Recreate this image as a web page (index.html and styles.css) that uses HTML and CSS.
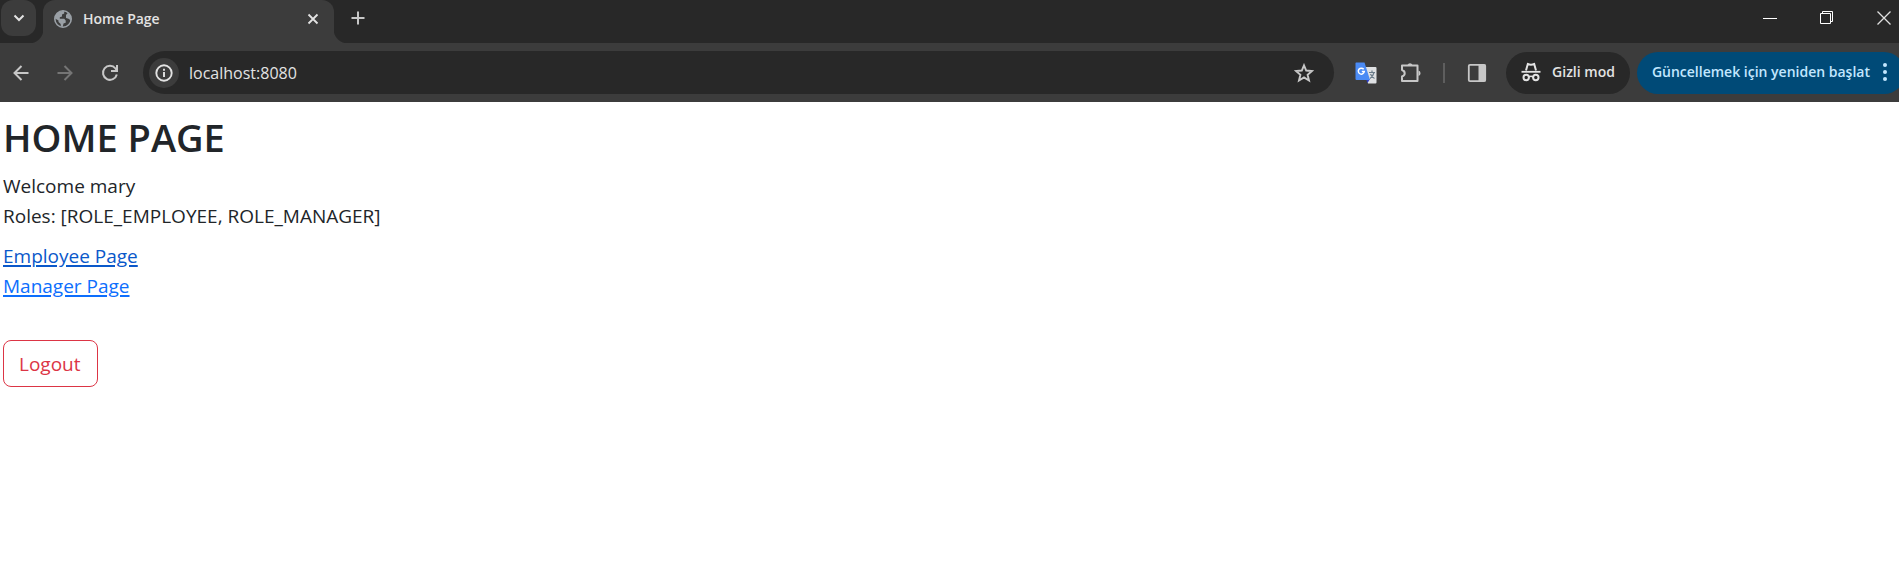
FILE: index.html
```html
<!DOCTYPE html>
<html lang="en">
<head>
<meta charset="utf-8">
<meta name="viewport" content="width=device-width, initial-scale=1">
<title>Home Page</title>
<link rel="stylesheet" href="styles.css">
</head>
<body>
<header class="browser" lang="tr">
  <div class="tab-strip">
    <div class="search-slot">
      <button class="tab-search" type="button" aria-label="Tab search">
        <svg width="12" height="8" viewBox="0 0 12 8" fill="none" stroke="#e3e3e3" stroke-width="2"><path d="M1.500 1.500 6 6l4.500-4.500"/></svg>
      </button>
    </div>
    <div class="tab">
      <svg class="globe" width="18" height="18" viewBox="0 0 18 18"><circle cx="9" cy="9" r="8.200" fill="#3c3c3c" stroke="#9aa0a6" stroke-width="1.600"/><path fill="#9aa0a6" d="M1 8.500C1 4.500 4.500 1 9 1l1.200.2v2.300L8 4.500v2L5.800 7.200v1.600h4.400l1.500 1.700v2.200l-2.200.8-.8 3.500-2-.5v-2.500L4.500 12v-1.500L1 8.500zM12 5l2-2.300 2.700 3.800.2 4-2.400-1.800-2.500-.7z"/></svg>
      <span class="tab-title">Home Page</span>
      <button class="icon-button" type="button" aria-label="Close tab">
        <svg width="12" height="12" viewBox="0 0 12 12" stroke="#e3e3e3" stroke-width="1.800"><path d="M1.500 1.500l9 9M10.500 1.500l-9 9"/></svg>
      </button>
    </div>
    <button class="icon-button new-tab" type="button" aria-label="New tab">
      <svg width="14" height="14" viewBox="0 0 14 14" stroke="#c7c7c7" stroke-width="2"><path d="M7 .5v13M.5 7h13"/></svg>
    </button>
    <div class="window-controls">
      <button class="icon-button" type="button" aria-label="Minimize"><svg width="14" height="14" viewBox="0 0 14 14" stroke="#fff"><path d="M0 7.500h14"/></svg></button>
      <button class="icon-button" type="button" aria-label="Restore"><svg width="14" height="14" viewBox="0 0 14 14" fill="none" stroke="#fff"><path d="M.5 2.500h10v10H.5zM2.500 2V.5h10v10H11"/></svg></button>
      <button class="icon-button" type="button" aria-label="Close"><svg width="14" height="14" viewBox="0 0 14 14" stroke="#e0e0e0" stroke-width="1.300"><path d="M.5.5l13 13M13.500.5l-13 13"/></svg></button>
    </div>
  </div>
  <div class="toolbar">
    <nav class="history">
      <button class="icon-button" type="button" aria-label="Back"><svg width="16" height="16" viewBox="0 0 16 16" fill="none" stroke="#c7c7c7" stroke-width="2"><path d="M15.500 8H2M8.500 1 1.500 8l7 7"/></svg></button>
      <button class="icon-button" type="button" aria-label="Forward"><svg width="16" height="16" viewBox="0 0 16 16" fill="none" stroke="#757575" stroke-width="2"><path d="M.5 8H14M7.500 1l7 7-7 7"/></svg></button>
      <button class="icon-button" type="button" aria-label="Reload"><svg width="18" height="18" viewBox="0 0 18 18" fill="none" stroke="#c7c7c7" stroke-width="2"><path d="M15.800 10.500A7 7 0 1 1 14.500 4.500L15.500 6M16 1v6h-6"/></svg></button>
    </nav>
    <div class="omnibox">
      <button class="site-info" type="button" aria-label="Site information">
        <svg width="18" height="18" viewBox="0 0 18 18" fill="none" stroke="#e3e3e3" stroke-width="1.900"><circle cx="9" cy="9" r="7.700"/><path d="M9 8v5M9 4.800v2"/></svg>
      </button>
      <input class="address" type="text" aria-label="Address" value="localhost:8080">
      <button class="icon-button" type="button" aria-label="Bookmark"><svg width="20" height="20" viewBox="0 0 20 20" fill="none" stroke="#c7c7c7" stroke-width="1.900"><path d="M10 2.300l2.200 5.200 5.800.5-4.400 3.800 1.400 5.700-5-3.100-5 3.100 1.400-5.700L2 8l5.800-.5z"/></svg></button>
    </div>
    <div class="extensions">
      <button class="icon-button" type="button" aria-label="Translate">
        <svg width="22" height="22" viewBox="0 0 22 22"><path fill="#dfe1e3" d="M9 5h11.500q1 0 1 1v14.500q0 1-1 1H13z"/><path fill="#2a3bc4" d="M11 17h4l-2.500 4z"/><path fill="#4a8af4" d="M1 .5h8.500L15 18H1.500q-1 0-1-1V1z"/><path d="M14 10.500h6M17 8.500v2M19 10.500q-1 4-4 6M15.500 12q1.500 3.500 4 4.500" fill="none" stroke="#6a7c8a" stroke-width="1.200"/><path d="M8.700 7.300A3 3 0 1 0 9.300 9.500H6.800" fill="none" stroke="#fff" stroke-width="1.500"/></svg>
      </button>
      <button class="icon-button" type="button" aria-label="Extensions">
        <svg width="22" height="22" viewBox="0 0 22 22"><path d="M3 3.500h15.500v15.500H3v-4.500Q5.700 13.500 5.700 11.200T3 8z" fill="none" stroke="#c7c7c7" stroke-width="2" stroke-linejoin="round"/><path d="M8.500 3a2.700 2.700 0 0 1 5 0zM19.500 8.500a2.800 2.800 0 0 1 0 5.400z" fill="#c7c7c7"/></svg>
      </button>
      <span class="divider"></span>
      <button class="icon-button" type="button" aria-label="Side panel">
        <svg width="20" height="20" viewBox="0 0 20 20"><rect x="1.800" y="1.800" width="16.400" height="16.400" rx="1.200" fill="none" stroke="#c7c7c7" stroke-width="1.800"/><path fill="#c7c7c7" d="M11.500 1.500h7v17h-7z"/></svg>
      </button>
    </div>
    <button class="chip incognito" type="button">
      <svg width="20" height="20" viewBox="0 0 20 20" fill="none" stroke="#e3e3e3"><path d="M.5 9.800h19" stroke-width="1.800"/><path d="M5 8.500 6.800 2q3.200 1.300 6.400 0L15 8.500" stroke-width="2"/><circle cx="5.200" cy="15.500" r="2.700" stroke-width="2"/><circle cx="14.800" cy="15.500" r="2.700" stroke-width="2"/><path d="M7.700 15q2.300-1.500 4.600 0" stroke-width="1.500"/></svg>
      Gizli mod
    </button>
    <button class="chip update" type="button">
      Güncellemek için yeniden başlat
      <svg width="4" height="18" viewBox="0 0 4 18" fill="#c2e7ff"><circle cx="2" cy="2" r="2"/><circle cx="2" cy="9" r="2"/><circle cx="2" cy="16" r="2"/></svg>
    </button>
  </div>
</header>
<main class="page">
  <h1 class="heading">HOME PAGE</h1>
  <p class="account">Welcome mary<br>Roles: [ROLE_EMPLOYEE, ROLE_MANAGER]</p>
  <nav class="links">
    <a class="link active" href="#employees">Employee Page</a>
    <a class="link" href="#managers">Manager Page</a>
  </nav>
  <form class="logout-form">
    <button class="logout" type="button">Logout</button>
  </form>
</main>
</body>
</html>
```
FILE: styles.css
```css
* { box-sizing: border-box; }

body {
  margin: 0;
  background: #fff;
  color: #212529;
  font: 19px/30px "Segoe UI", "Open Sans", "Noto Sans", sans-serif;
  overflow-x: hidden;
}

button, input { font: inherit; }
svg { display: block; flex: none; }

.icon-button {
  display: grid;
  place-items: center;
  flex: none;
  padding: 0;
  border: 0;
  background: none;
}

/* Tab strip */
.tab-strip {
  display: flex;
  height: 43px;
  background: #282828;
}

.search-slot {
  width: 43px;
  padding-left: 1px;
  background: radial-gradient(circle at 0 0, #282828 14px, #3c3c3c 15px) right bottom / 14px 14px no-repeat;
}

.tab-search {
  display: grid;
  place-items: center;
  width: 35px;
  height: 36px;
  padding: 0;
  border: 0;
  border-radius: 12px;
  background: #3c3c3c;
}

.tab {
  display: flex;
  align-items: center;
  gap: 11px;
  width: 291px;
  padding: 0 15px 6px 11px;
  border-radius: 12px 12px 0 0;
  background: #3c3c3c;
}

.tab-title {
  flex: 1;
  color: #e3e3e3;
  font-size: 14px;
  font-weight: 600;
}

.new-tab {
  width: 48px;
  padding: 0 0 7px;
  background: radial-gradient(circle at 14px 0, #282828 14px, #3c3c3c 15px) left bottom / 14px 14px no-repeat;
}

.window-controls {
  display: flex;
  gap: 43px;
  height: 35px;
  margin-left: auto;
  padding-right: 8px;
}

/* Toolbar */
.toolbar {
  display: flex;
  align-items: center;
  height: 59px;
  padding-left: 13px;
  background: #3c3c3c;
}

.history {
  display: flex;
  gap: 28px;
  width: 130px;
}

.omnibox {
  display: flex;
  flex: 1;
  align-items: center;
  min-width: 0;
  height: 43px;
  padding: 0 20px 0 6px;
  border-radius: 22px;
  background: #282828;
}

.site-info {
  display: grid;
  place-items: center;
  width: 30px;
  height: 30px;
  padding: 0;
  border: 0;
  border-radius: 50%;
  background: #3c3c3c;
}

.address {
  flex: 1;
  min-width: 0;
  margin-left: 10px;
  padding: 0;
  border: 0;
  outline: 0;
  background: none;
  color: #e3e3e3;
  font-size: 16px;
}

.extensions {
  display: flex;
  align-items: center;
  gap: 22px;
  padding: 0 19px 0 21px;
}

.divider {
  width: 2px;
  height: 20px;
  background: #5e5e5e;
}

.chip {
  display: flex;
  align-items: center;
  flex: none;
  height: 42px;
  border: 0;
  border-radius: 21px;
  font-size: 14px;
  font-weight: 600;
  white-space: nowrap;
}

.incognito {
  gap: 11px;
  padding: 0 15px 1px;
  background: #282828;
  color: #e3e3e3;
}

.update {
  gap: 13px;
  margin: 0 -6px 0 7px;
  padding: 0 18px 1px 15px;
  background: #004a77;
  color: #c2e7ff;
}

/* Page */
.page { padding: 11px 3px; }

.heading {
  margin: 0 0 10px;
  font-size: 38px;
  font-weight: 600;
  line-height: 48px;
}

.account { margin: 0 0 10px; }

.links {
  display: flex;
  flex-direction: column;
  align-items: flex-start;
}

.link {
  color: #0d6efd;
  text-decoration-thickness: 2px;
  text-underline-offset: 2px;
}

.link.active { color: #0a58ca; }

.logout-form { margin-top: 39px; }

.logout {
  padding: 8px 16px 7px 15px;
  border: 1px solid #dc3545;
  border-radius: 8px;
  background: none;
  color: #dc3545;
}
```
